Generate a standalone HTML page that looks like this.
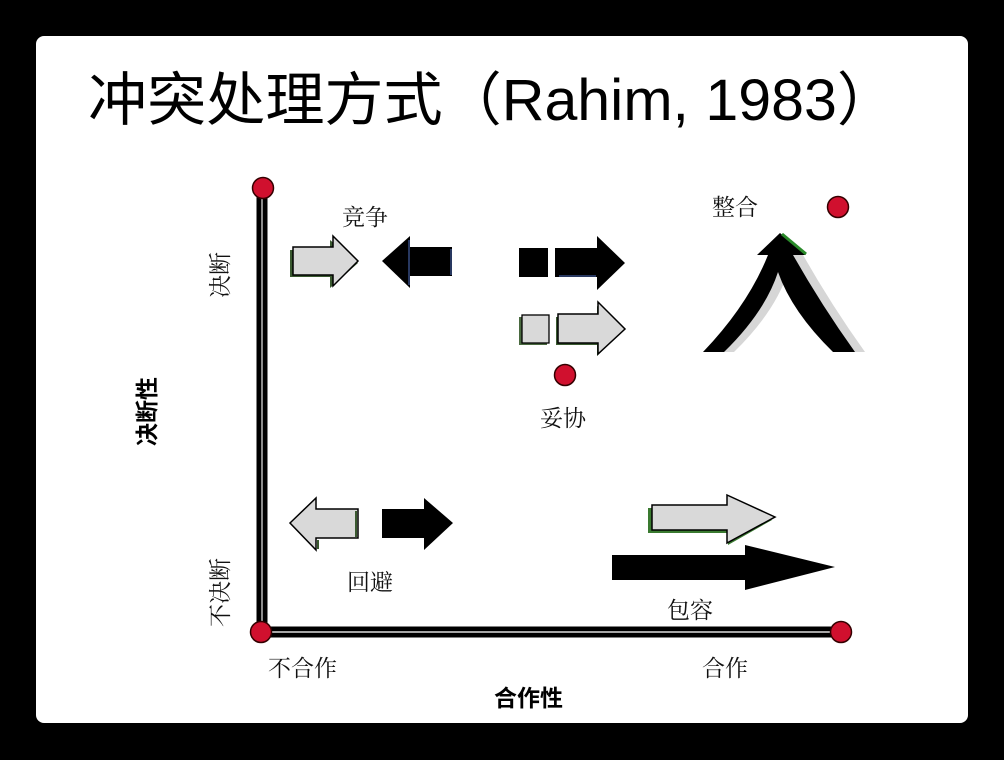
<!DOCTYPE html>
<html><head><meta charset="utf-8"><style>
html,body{margin:0;padding:0;background:#000;}
svg{display:block}
.t{font-family:"Liberation Serif","Noto Serif CJK SC",serif;font-size:23px;fill:#111}
.b{font-family:"Liberation Sans","Noto Sans CJK SC",sans-serif;font-size:23px;font-weight:bold;fill:#000}
</style></head><body>
<svg width="1004" height="760" viewBox="0 0 1004 760" xmlns="http://www.w3.org/2000/svg">
<rect x="0" y="0" width="1004" height="760" fill="#000"/>
<rect x="36" y="36" width="932" height="687" rx="8" fill="#fff"/>
<text x="88" y="120" font-family="Liberation Sans,'Noto Sans CJK SC',sans-serif" font-size="58" textLength="808" lengthAdjust="spacingAndGlyphs" fill="#000">冲突处理方式（Rahim, 1983）</text>

<!-- axes -->
<line x1="262" y1="188" x2="262" y2="632" stroke="#000" stroke-width="11"/>
<line x1="262" y1="190" x2="262" y2="630" stroke="#bbb" stroke-width="1.5"/>
<line x1="262" y1="632" x2="841" y2="632" stroke="#000" stroke-width="11"/>
<line x1="264" y1="632" x2="839" y2="632" stroke="#ddd" stroke-width="1.5"/>
<g fill="#d0102e" stroke="#300" stroke-width="1.5">
<circle cx="263" cy="188" r="10.5"/><circle cx="261" cy="632" r="10.5"/>
<circle cx="841" cy="632" r="10.5"/><circle cx="838" cy="207" r="10.5"/>
<circle cx="565" cy="375" r="10.5"/></g>

<!-- competing -->
<polygon points="290,250 330,250 330,240 358,263 330,288 330,277 290,277" fill="#3a5a30"/>
<polygon points="293,247 333,247 333,236 358,261 333,286 333,275 293,275" fill="#d9d9d9" stroke="#000" stroke-width="1.5"/>
<polygon points="382,261 410,236 410,247 452,247 452,276 410,276 410,288" fill="#000"/>
<line x1="409" y1="240" x2="409" y2="285" stroke="#5070c0" stroke-width="1"/>
<line x1="451" y1="249" x2="451" y2="275" stroke="#5070c0" stroke-width="1"/>

<!-- compromise -->
<rect x="519" y="248" width="29" height="29" fill="#000"/>
<polygon points="555,248 597,248 597,236 625,263 597,290 597,277 555,277" fill="#000"/>
<line x1="559" y1="276" x2="596" y2="276" stroke="#5070c0" stroke-width="1"/>
<rect x="519" y="317" width="28" height="28" fill="#4a6a40"/>
<rect x="522" y="315" width="27" height="28" fill="#d9d9d9" stroke="#000" stroke-width="1.3"/>
<polygon points="556,317 597,317 597,306 622,331 597,356 597,345 556,345" fill="#3a5a30"/>
<polygon points="558,314 598,314 598,302 625,329 598,354 598,343 558,343" fill="#d9d9d9" stroke="#000" stroke-width="1.5"/>

<!-- integrating -->
<g transform="translate(10,0)">
<path d="M703,352 L724,352 Q765,312 778,272 Q792,312 833,352 L855,352 Q822,306 793,255 L768,255 Q748,305 703,352Z" fill="#d6d6d6"/>
</g>
<path d="M703,352 L724,352 Q765,312 778,272 Q792,312 833,352 L855,352 Q822,306 793,255 L806,255 L780,233 L757,255 L768,255 Q748,305 703,352Z" fill="#000"/>
<line x1="782" y1="234" x2="806" y2="254" stroke="#2a8a2a" stroke-width="3"/>

<!-- avoiding -->
<polygon points="290,523 316,498 316,509 358,509 358,538 316,538 316,550" fill="#d9d9d9" stroke="#000" stroke-width="1.5"/>
<line x1="356" y1="511" x2="356" y2="537" stroke="#3a5a30" stroke-width="2"/>
<line x1="318" y1="540" x2="318" y2="549" stroke="#3a5a30" stroke-width="2"/>
<polygon points="382,509 424,509 424,498 453,523 424,550 424,538 382,538" fill="#000"/>

<!-- accommodating -->
<polygon points="648,508 728,508 728,497 772,520 728,545 728,533 648,533" fill="#3a7a30"/>
<polygon points="652,505 727,505 727,495 775,517 727,543 727,530 652,530" fill="#d9d9d9" stroke="#000" stroke-width="1.5"/>
<polygon points="612,555 745,555 745,545 835,567 745,590 745,580 612,580" fill="#000"/>

<!-- labels -->
<text class="t" x="342" y="225">竞争</text>
<text class="t" x="712" y="215">整合</text>
<text class="t" x="540" y="426">妥协</text>
<text class="t" x="347" y="590">回避</text>
<text class="t" x="667" y="618">包容</text>
<text class="t" x="268" y="676">不合作</text>
<text class="t" x="702" y="676">合作</text>
<text class="b" x="494" y="706">合作性</text>
<text class="t" transform="translate(228,298) rotate(-90)">决断</text>
<text class="t" transform="translate(228,627) rotate(-90)">不决断</text>
<text class="b" transform="translate(155,446) rotate(-90)">决断性</text>
</svg>
</body></html>
